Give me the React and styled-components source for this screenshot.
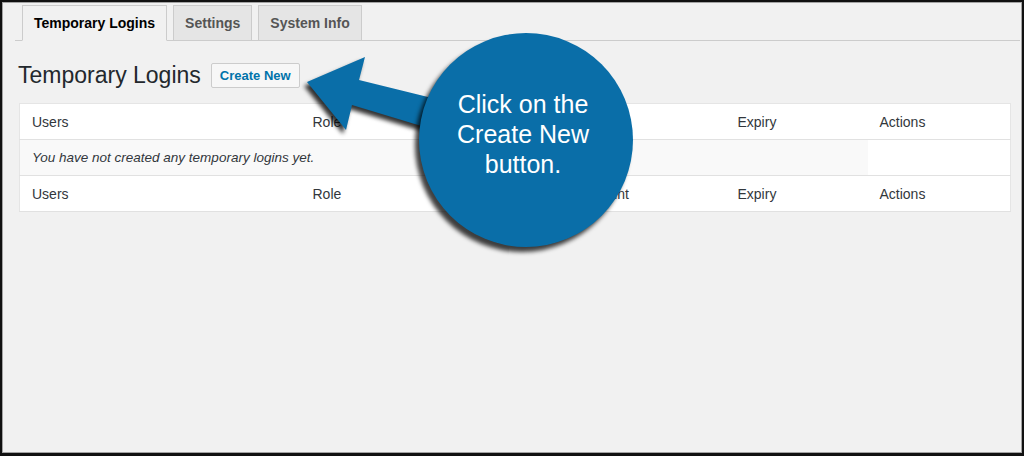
import React from 'react'
import styled, { createGlobalStyle } from 'styled-components'

const GlobalStyle = createGlobalStyle`
  html, body { margin: 0; padding: 0; background: #111; }
  * { box-sizing: border-box; }
`

const Frame = styled.div`
  position: relative;
  width: 1024px;
  height: 456px;
  border: 2px solid #111;
  border-bottom-width: 3px;
  background: #f1f1f1;
  box-shadow: inset 0 0 0 1px #a3a3a3;
  padding: 3px 2px 0 1px;
  font-family: "Liberation Sans", Arial, sans-serif;
  color: #23282d;
  overflow: hidden;
`

const TabNav = styled.nav`
  display: flex;
  gap: 6px;
  margin: 0 0 0 12px;
  padding-left: 7px;
  border-bottom: 1px solid #ccc;
  height: 36px;
  align-items: flex-end;
`

const Tab = styled.div`
  height: ${p => (p.$active ? '36px' : '35px')};
  margin-bottom: ${p => (p.$active ? '-1px' : '0')};
  padding: 0 11px;
  display: flex;
  align-items: center;
  border: 1px solid #ccc;
  border-bottom: ${p => (p.$active ? '1px solid #f1f1f1' : 'none')};
  background: ${p => (p.$active ? '#f1f1f1' : '#e5e5e5')};
  color: ${p => (p.$active ? '#000' : '#555')};
  font-size: 14px;
  font-weight: 700;
`

const Header = styled.div`
  display: flex;
  align-items: center;
  gap: 10px;
  margin: 22px 0 0 15px;
  height: 25px;
`

const Title = styled.h1`
  margin: 0;
  font-size: 23px;
  font-weight: 400;
  color: #23282d;
`

const Button = styled.span`
  height: 25px;
  padding: 0 8px;
  display: flex;
  align-items: center;
  border: 1px solid #ccc;
  border-radius: 2px;
  background: #f7f7f7;
  color: #0073aa;
  font-size: 13px;
  font-weight: 700;
`

const Table = styled.table`
  margin: 15px 10px 0 16px;
  width: 992px;
  border-collapse: collapse;
  background: #fff;
  border: 1px solid #e5e5e5;
  table-layout: fixed;
  font-size: 14px;
  color: #32373c;
`

const Cell = styled.td`
  height: 36px;
  padding: 0 12px;
  text-align: left;
  font-weight: 400;
  border-bottom: 1px solid #e1e1e1;
  white-space: nowrap;
`

const Empty = styled(Cell)`
  background: #f9f9f9;
  font-style: italic;
  font-size: 13.5px;
`

const Callout = styled.div`
  position: absolute;
  left: 417px;
  top: 31px;
  width: 214px;
  height: 214px;
  border-radius: 50%;
  background: #0a6ea8;
  box-shadow: -4px 5px 4px rgba(0, 0, 0, 0.75);
  display: flex;
  flex-direction: column;
  align-items: center;
  justify-content: center;
  padding: 0 6px 12px 0;
  color: #fff;
  font-size: 25px;
  line-height: 30px;
  text-align: center;
`

const Arrow = styled.svg`
  position: absolute;
  left: 0;
  top: 0;
  filter: drop-shadow(-3px 4px 2px rgba(0, 0, 0, 0.8));
`

const columns = [
  { label: 'Users', width: 281 },
  { label: 'Role', width: 125 },
  { label: 'Last Logged In', width: 124 },
  { label: 'Visit Count', width: 176 },
  { label: 'Expiry', width: 142 },
  { label: 'Actions' },
]

const HeadRow = () => (
  <tr>
    {columns.map(c => (
      <Cell as="th" key={c.label}>{c.label}</Cell>
    ))}
  </tr>
)

const App = () => (
  <>
    <GlobalStyle />
    <Frame>
      <TabNav>
        <Tab $active>Temporary Logins</Tab>
        <Tab>Settings</Tab>
        <Tab>System Info</Tab>
      </TabNav>
      <Header>
        <Title>Temporary Logins</Title>
        <Button>Create New</Button>
      </Header>
      <Table>
        <colgroup>
          {columns.map(c => (
            <col key={c.label} style={c.width ? { width: c.width } : undefined} />
          ))}
        </colgroup>
        <thead><HeadRow /></thead>
        <tbody>
          <tr>
            <Empty colSpan={5}>You have not created any temporary logins yet.</Empty>
            <Cell />
          </tr>
        </tbody>
        <tfoot><HeadRow /></tfoot>
      </Table>
      <Arrow width="1024" height="456" viewBox="0 0 1024 456">
        <polygon
          points="305,80 363,55 357,78 430,96 426,126 350,103 344,128"
          fill="#0a6ea8"
        />
      </Arrow>
      <Callout>
        <div>Click on the</div>
        <div>Create New</div>
        <div>button.</div>
      </Callout>
    </Frame>
  </>
)

export default App
